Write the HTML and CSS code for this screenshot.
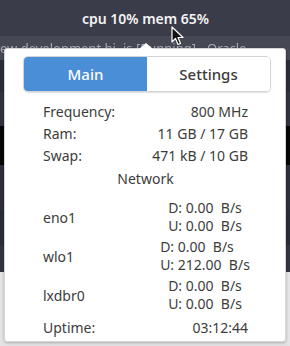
FILE: index.html
```html
<!DOCTYPE html>
<html lang="en">
<head>
    <meta charset="UTF-8">
    <meta name="viewport" content="width=device-width, initial-scale=1.0">
    <title>System Monitor</title>
    <link rel="stylesheet" href="styles.css">
</head>
<body>
    <div class="topbar">
        <span class="indicator">cpu 10% mem 65%</span>
    </div>
    <div class="desktop">
        <div class="win-title">ew development.hi..js [Running] - Oracle</div>
        <div class="stripe s1"></div>
        <div class="stripe s2"></div>
        <div class="stripe s3"></div>
        <div class="stripe s4"></div>
        <div class="stripe s5"></div>
        <div class="stripe s6"></div>
        <div class="stripe s7"></div>
    </div>

    <svg class="cursor" width="13" height="20" viewBox="0 0 13 20">
        <path d="M1 1 L1 16 L4.5 12.5 L7 18.5 L9.5 17.5 L7 11.5 L12 11.5 Z" fill="#111" stroke="#fff" stroke-width="1.2" stroke-linejoin="round"/>
    </svg>

    <div class="popup">
        <div class="arrow"></div>
        <div class="switcher">
            <button class="tab active">Main</button>
            <button class="tab">Settings</button>
        </div>

        <div class="row r-freq">
            <span>Frequency:</span>
            <span>800 MHz</span>
        </div>
        <div class="row">
            <span>Ram:</span>
            <span>11 GB / 17 GB</span>
        </div>
        <div class="row r-tall">
            <span>Swap:</span>
            <span>471 kB / 10 GB</span>
        </div>
        <div class="row r-tall heading">Network</div>

        <div class="net net-first">
            <span>eno1</span>
            <div class="net-val">
                <div>
                    <div class="line">D: 0.00  B/s</div>
                    <div class="line">U: 0.00  B/s</div>
                </div>
            </div>
        </div>
        <div class="net">
            <span>wlo1</span>
            <div class="net-val">
                <div>
                    <div class="line">D: 0.00  B/s</div>
                    <div class="line">U: 212.00  B/s</div>
                </div>
            </div>
        </div>
        <div class="net">
            <span>lxdbr0</span>
            <div class="net-val">
                <div>
                    <div class="line">D: 0.00  B/s</div>
                    <div class="line">U: 0.00  B/s</div>
                </div>
            </div>
        </div>

        <div class="row r-up">
            <span>Uptime:</span>
            <span>03:12:44</span>
        </div>
    </div>
</body>
</html>
```

FILE: styles.css
```css
body {
    margin: 0;
    width: 290px;
    height: 346px;
    overflow: hidden;
    background-color: #2c2e3a;
    font-family: "Noto Sans", "DejaVu Sans", sans-serif;
}
.topbar {
    height: 36px;
    background-color: #3a3c4a;
    display: flex;
    align-items: center;
    justify-content: center;
}
.indicator {
    color: #f4f4f4;
    font-size: 14px;
    font-weight: 600;
    padding-left: 1px;
}
.desktop {
    display: flex;
    flex-direction: column;
}
.win-title {
    height: 24px;
    background-color: #464854;
    color: #a8aab4;
    font-size: 13px;
    line-height: 24px;
    white-space: nowrap;
    filter: blur(0.4px);
}
.s1 { height: 32px; background-color: #2a2c38; }
.s2 { height: 34px; background-color: #30323f; }
.s3 { height: 39px; background-color: #060606; }
.s4 { height: 45px; background-color: #2d2f3c; }
.s5 { height: 35px; background-color: #292b37; }
.s6 { height: 27px; background-color: #32343f; }
.s7 { height: 80px; background-color: #e4e4e6; }

.cursor {
    position: absolute;
    left: 171px;
    top: 26px;
}

.popup {
    position: absolute;
    left: 4px;
    top: 48px;
    width: 282px;
    height: 294px;
    background: #fff;
    border: 1px solid #d6d6d6;
    border-radius: 3px;
    box-shadow: 0 1px 3px rgba(0,0,0,0.25);
    color: #3c3c3c;
    font-size: 14px;
    box-sizing: border-box;
    padding: 0 37px 0 38px;
}
.arrow {
    position: absolute;
    left: 134px;
    top: -6px;
    width: 0;
    height: 0;
    border-left: 7px solid transparent;
    border-right: 7px solid transparent;
    border-bottom: 6px solid #fff;
}

.switcher {
    display: flex;
    width: 248px;
    height: 36px;
    margin: 7px 0 0 -20px;
    border: 1px solid #d4d4d4;
    border-radius: 5px;
    overflow: hidden;
    box-sizing: border-box;
    box-shadow: 0 1px 1px rgba(0,0,0,0.12);
}
.tab {
    flex: 1;
    border: none;
    background: #fff;
    color: #3c3c3c;
    font-family: inherit;
    font-size: 15px;
    font-weight: 500;
    padding: 0;
}
.tab.active {
    background-color: #4a8ed7;
    color: #fff;
}

.row {
    display: flex;
    justify-content: space-between;
    align-items: center;
    height: 22px;
}
.r-freq {
    margin-top: 8px;
}
.r-tall {
    height: 23px;
}
.heading {
    justify-content: center;
}
.net {
    display: flex;
    align-items: center;
    justify-content: space-between;
    height: 36px;
    margin-top: 3px;
}
.net-first {
    margin-top: 9px;
}
.net-val {
    width: 86px;
    display: flex;
    justify-content: center;
}
.line {
    height: 18px;
    line-height: 18px;
    white-space: pre;
}
.r-up {
    margin-top: 3px;
}
```
